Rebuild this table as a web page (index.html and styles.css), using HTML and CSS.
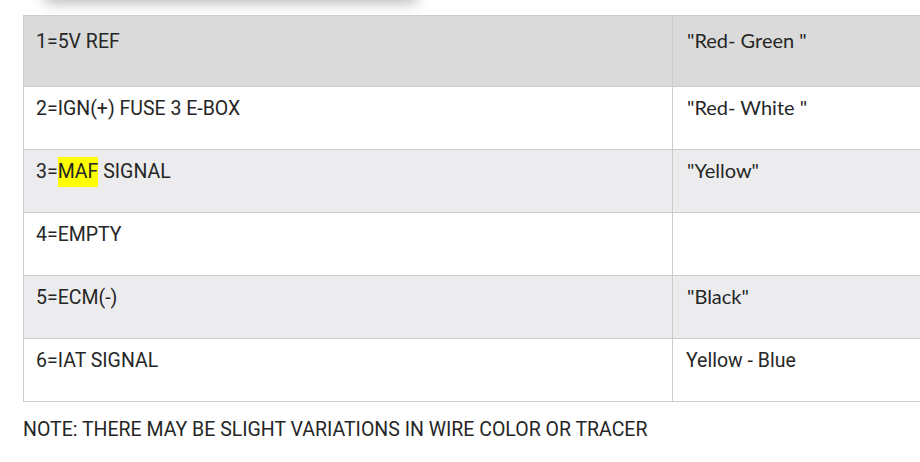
FILE: index.html
```html
<!DOCTYPE html>
<html lang="en">
<head>
<meta charset="utf-8">
<title>MAF sensor pinout</title>
<link rel="stylesheet" href="styles.css">
</head>
<body>
<div class="page">
  <div class="card-shadow"></div>
  <table class="pinout">
    <colgroup><col class="c-pin"><col class="c-wire"></colgroup>
    <tbody>
      <tr class="row head"><td>1=5V REF</td><td><span class="q">"Red- Green "</span></td></tr>
      <tr class="row"><td>2=IGN(+) FUSE 3 E-BOX</td><td><span class="q">"Red- White "</span></td></tr>
      <tr class="row alt"><td>3=<mark class="hl">MAF</mark> SIGNAL</td><td><span class="q">"Yellow"</span></td></tr>
      <tr class="row"><td>4=EMPTY</td><td></td></tr>
      <tr class="row alt"><td>5=ECM(-)</td><td><span class="q">"Black"</span></td></tr>
      <tr class="row"><td>6=IAT SIGNAL</td><td class="plain">Yellow - Blue</td></tr>
    </tbody>
  </table>
  <p class="note">NOTE: THERE MAY BE SLIGHT VARIATIONS IN WIRE COLOR OR TRACER</p>
</div>
</body>
</html>
```
FILE: styles.css
```css
html, body {
  margin: 0;
  padding: 0;
  background: #ffffff;
  overflow: hidden;
}
body {
  font-family: Roboto, "Open Sans", Arial, sans-serif;
  font-size: 19.5px;
  line-height: 28px;
  color: #262626;
}
.page {
  width: 920px;
  padding-left: 23px;
  box-sizing: border-box;
  overflow: hidden;
}
.card-shadow {
  width: 372px;
  height: 30px;
  margin: -30px 0 0 22px;
  background: #ffffff;
  box-shadow: 0 3px 14px rgba(0, 0, 0, 0.28);
}
.pinout {
  margin-top: 15px;
  width: 950px;
  table-layout: fixed;
  border-collapse: collapse;
  border: 1px solid #cccccc;
}
.c-pin { width: 649px; }
.c-wire { width: 301px; }
.pinout td {
  border: 1px solid #cccccc;
  vertical-align: top;
  padding: 8px 12px 0 12px;
  height: 54px;
}
.pinout td + td { padding-left: 14px; }
.pinout td.plain { padding-left: 13px; }
.row { background: #ffffff; }
.row.alt { background: #ececee; }
.row.head { background: #dadada; }
.row.head td { padding-top: 12px; height: 58px; }
.q {
  font-family: Lato, "Open Sans", sans-serif;
  font-size: 20px;
  line-height: 20px;
}
.hl {
  background: #ffff00;
  color: inherit;
  padding: 3px 0 4px;
}
.note {
  margin: 14px 0 0 0;
}
```
